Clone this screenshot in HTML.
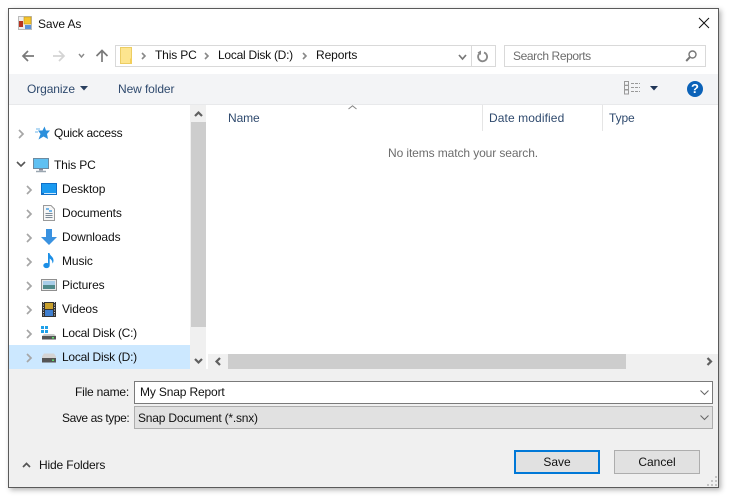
<!DOCTYPE html>
<html><head><meta charset="utf-8">
<style>
html,body{margin:0;padding:0;background:#fff}
body{width:731px;height:500px;position:relative;overflow:hidden;font-family:"Liberation Sans",sans-serif;font-size:12px;color:#111}
.a{position:absolute}
.t{position:absolute;white-space:nowrap;line-height:16px;letter-spacing:-.1px}
.b{color:#2f4a6e}
svg{position:absolute;overflow:visible}
</style></head><body>
<div class="a" style="left:8px;top:8px;width:709px;height:478px;border:1px solid #5a5a5a;background:#f0f0f0;box-shadow:2px 2px 5px rgba(0,0,0,.3)"></div>
<div class="a" style="left:9px;top:9px;width:709px;height:65px;background:#fff"></div>
<div class="a" style="left:9px;top:74px;width:709px;height:30px;background:#f3f4f6"></div>
<div class="a" style="left:9px;top:104px;width:709px;height:1px;background:#e8e9eb"></div>
<div class="a" style="left:9px;top:105px;width:181px;height:264px;background:#fff"></div>
<div class="a" style="left:191px;top:105px;width:15px;height:264px;background:#f0f0f0"></div>
<div class="a" style="left:191px;top:122px;width:15px;height:205px;background:#cdcdcd"></div>
<div class="a" style="left:206px;top:105px;width:2px;height:264px;background:#fff"></div>
<div class="a" style="left:208px;top:105px;width:510px;height:249px;background:#fff"></div>
<div class="a" style="left:208px;top:354px;width:510px;height:15px;background:#f0f0f0"></div>
<div class="a" style="left:228px;top:354px;width:398px;height:15px;background:#cdcdcd"></div>
<div class="a" style="left:9px;top:345px;width:181px;height:24px;background:#cce8ff"></div>
<div class="a" style="left:482px;top:105px;width:1px;height:26px;background:#e5e5e5"></div>
<div class="a" style="left:602px;top:105px;width:1px;height:26px;background:#e5e5e5"></div>

<!-- title -->
<svg style="left:18px;top:16px" width="15" height="15">
<rect x=".5" y=".5" width="13" height="13" fill="#eee" stroke="#bbb"/>
<rect x="1" y="5" width="4" height="6" fill="#b8331f"/><rect x="6" y="1" width="7" height="7" fill="#f4c430" stroke="#c99a10" stroke-width=".6"/><rect x="7" y="9" width="6" height="4" fill="#5b93d8"/>
</svg>
<div class="t" style="left:38px;top:16px">Save As</div>
<svg style="left:698px;top:17px" width="14" height="14"><path d="M1 1L11 11M11 1L1 11" stroke="#111" stroke-width="1" fill="none"/></svg>

<!-- nav -->
<svg style="left:22px;top:49px" width="14" height="14"><path d="M1 7H12M6 2L1 7L6 12" stroke="#7a7a7a" stroke-width="1.700" fill="none"/></svg>
<svg style="left:52px;top:49px" width="14" height="14"><path d="M1 7H12M7 2L12 7L7 12" stroke="#d4d4d4" stroke-width="1.700" fill="none"/></svg>
<svg style="left:78px;top:53px" width="8" height="6"><path d="M1 1L3.500 4L6 1" stroke="#8a8a8a" stroke-width="1.400" fill="none"/></svg>
<svg style="left:95px;top:49px" width="14" height="14"><path d="M7 13V2M1.500 7L7 1.500L12.500 7" stroke="#7a7a7a" stroke-width="1.700" fill="none"/></svg>
<div class="a" style="left:115px;top:45px;width:379px;height:20px;border:1px solid #d9d9d9;background:#fff"></div>
<div class="a" style="left:471px;top:46px;width:1px;height:20px;background:#d9d9d9"></div>
<svg style="left:120px;top:47px" width="13" height="17"><path d="M.5.5H11.500V16.500H.5Z" fill="#fde58f" stroke="#eccd63"/><path d="M10 11.500H12V16.500H10Z" fill="#f4cf5a"/></svg>
<svg style="left:141px;top:52px" width="6" height="9"><path d="M1 1L4 4L1 7" stroke="#888" stroke-width="1.600" fill="none"/></svg>
<div class="t" style="left:155px;top:47px;letter-spacing:-.15px">This PC</div>
<svg style="left:204px;top:52px" width="6" height="9"><path d="M1 1L4 4L1 7" stroke="#888" stroke-width="1.600" fill="none"/></svg>
<div class="t" style="left:218px;top:47px;letter-spacing:-.25px">Local Disk (D:)</div>
<svg style="left:302px;top:52px" width="6" height="9"><path d="M1 1L4 4L1 7" stroke="#888" stroke-width="1.600" fill="none"/></svg>
<div class="t" style="left:316px;top:47px">Reports</div>
<svg style="left:458px;top:54px" width="10" height="7"><path d="M1 1L4.500 5L8 1" stroke="#777" stroke-width="1.700" fill="none"/></svg>
<svg style="left:476px;top:50px" width="13" height="13"><path d="M3.500 3.500A4.500 4.500 0 1 0 8 2.500" stroke="#888" stroke-width="1.800" fill="none"/><path d="M4 .5V5L.5 2.500Z" fill="#888" transform="translate(1,0)"/></svg>
<div class="a" style="left:504px;top:45px;width:200px;height:20px;border:1px solid #d9d9d9;background:#fff"></div>
<div class="t" style="left:513px;top:48px;color:#6d6d6d;letter-spacing:-.4px">Search Reports</div>
<svg style="left:685px;top:50px" width="12" height="12"><circle cx="7.500" cy="4.500" r="3.500" stroke="#777" stroke-width="1.400" fill="none"/><path d="M4.800 7.200L1.200 11" stroke="#777" stroke-width="2"/></svg>

<!-- toolbar -->
<div class="t b" style="left:27px;top:81px">Organize</div>
<svg style="left:80px;top:86px" width="8" height="5"><path d="M0 0H8L4 4.500Z" fill="#2a3f5f"/></svg>
<div class="t b" style="left:118px;top:81px">New folder</div>
<svg style="left:624px;top:81px" width="17" height="15"><rect x=".5" y=".5" width="4" height="3.700" fill="none" stroke="#999"/><rect x=".5" y="4.500" width="4" height="4" fill="none" stroke="#999"/><rect x=".5" y="9" width="4" height="4" fill="none" stroke="#999"/><path d="M7 2.500H16M7 6.500H16M7 10.500H16" stroke="#999" stroke-dasharray="3 1"/></svg>
<svg style="left:650px;top:86px" width="8" height="5"><path d="M0 0H8L4 4.500Z" fill="#1f3557"/></svg>
<div class="a" style="left:687px;top:81px;width:16px;height:16px;border-radius:50%;background:#0b62b8;color:#fff;font-weight:bold;font-size:13px;line-height:16px;text-align:center">?</div>

<!-- headers -->
<svg style="left:348px;top:105px" width="9" height="5"><path d="M.5 4L4.500 .8L8.500 4" stroke="#888" fill="none"/></svg>
<div class="t b" style="left:228px;top:110px">Name</div>
<div class="t b" style="left:489px;top:110px;letter-spacing:.1px">Date modified</div>
<div class="t b" style="left:609px;top:110px">Type</div>
<div class="t" style="left:388px;top:145px;color:#6d6d6d">No items match your search.</div>

<!-- scroll arrows -->
<svg style="left:194px;top:111px" width="9" height="6"><path d="M1 5L4.500 1.500L8 5" stroke="#606060" stroke-width="2.200" fill="none"/></svg>
<svg style="left:194px;top:358px" width="9" height="6"><path d="M1 1L4.500 4.500L8 1" stroke="#606060" stroke-width="2.200" fill="none"/></svg>
<svg style="left:215px;top:357px" width="7" height="9"><path d="M5 1L1.500 4.500L5 8" stroke="#606060" stroke-width="2.200" fill="none"/></svg>
<svg style="left:706px;top:357px" width="7" height="9"><path d="M1.500 1L5 4.500L1.500 8" stroke="#606060" stroke-width="2.200" fill="none"/></svg>

<!-- tree -->
<svg style="left:18px;top:129px" width="6" height="10"><path d="M1 1L5 5L1 9" stroke="#a6a6a6" stroke-width="1.700" fill="none"/></svg>
<svg style="left:35px;top:126px" width="15" height="14"><path d="M9.500 .5L11 4.500H15L12 8L13 13L8.500 10.500L3.500 13.500L5.500 8L3 4.500H7.500Z" fill="#2a8fdc"/><path d="M1 3H5M0 6H3" stroke="#6db4e8"/></svg>
<div class="t" style="left:54px;top:125px;letter-spacing:-.25px">Quick access</div>
<svg style="left:16px;top:161px" width="10" height="7"><path d="M1 1L5 5L9 1" stroke="#555" stroke-width="1.600" fill="none"/></svg>
<svg style="left:33px;top:158px" width="16" height="15"><rect x=".5" y=".5" width="15" height="10" fill="#5fc0f2" stroke="#6d8aa0"/><path d="M6 11H10V12.500H6Z" fill="#889"/><path d="M3 13.500H13" stroke="#9aa6b0" stroke-width="1.500"/></svg>
<div class="t" style="left:54px;top:157px;letter-spacing:-.15px">This PC</div>

<svg style="left:26px;top:185px" width="6" height="10"><path d="M1 1L5 5L1 9" stroke="#a6a6a6" stroke-width="1.700" fill="none"/></svg>
<svg style="left:41px;top:183px" width="16" height="12"><rect width="16" height="12" fill="#0f6fc8"/><rect x="1" y="1" width="14" height="9" fill="#1a9af0"/><path d="M3 10.500H15" stroke="#cfe8fb"/></svg>
<div class="t" style="left:62px;top:181px">Desktop</div>

<svg style="left:26px;top:209px" width="6" height="10"><path d="M1 1L5 5L1 9" stroke="#a6a6a6" stroke-width="1.700" fill="none"/></svg>
<svg style="left:43px;top:205px" width="12" height="16"><path d="M.5.5H8L11.500 4V15.500H.5Z" fill="#f6f6f6" stroke="#9a9a9a"/><path d="M3 4H6M6 6H9" stroke="#2a8fdc" stroke-width="1.200"/><path d="M2.500 8.500H9.500M2.500 10.500H9.500M2.500 12.500H9.500" stroke="#7d8a96"/></svg>
<div class="t" style="left:62px;top:205px">Documents</div>

<svg style="left:26px;top:233px" width="6" height="10"><path d="M1 1L5 5L1 9" stroke="#a6a6a6" stroke-width="1.700" fill="none"/></svg>
<svg style="left:41px;top:229px" width="16" height="16"><path d="M5 0H11V8H16L8 16L0 8H5Z" fill="#3a92e0"/></svg>
<div class="t" style="left:62px;top:229px">Downloads</div>

<svg style="left:26px;top:257px" width="6" height="10"><path d="M1 1L5 5L1 9" stroke="#a6a6a6" stroke-width="1.700" fill="none"/></svg>
<svg style="left:43px;top:252px" width="12" height="17"><ellipse cx="3.500" cy="13.500" rx="3.200" ry="2.600" fill="#1c8fe6"/><path d="M5 13V1H6.500C7 4 10.500 4.500 10.500 8.500C10.500 10 10 11 9.500 11.500C9.500 8.500 8 7.500 6.700 6.500V13Z" fill="#1c8fe6"/></svg>
<div class="t" style="left:62px;top:253px">Music</div>

<svg style="left:26px;top:281px" width="6" height="10"><path d="M1 1L5 5L1 9" stroke="#a6a6a6" stroke-width="1.700" fill="none"/></svg>
<svg style="left:41px;top:279px" width="16" height="12"><rect x=".5" y=".5" width="15" height="11" fill="#e8e8e8" stroke="#8f8f8f"/><rect x="2" y="2" width="12" height="4" fill="#a8cde8"/><rect x="2" y="6" width="12" height="4" fill="#4f8a8a"/></svg>
<div class="t" style="left:62px;top:277px">Pictures</div>

<svg style="left:26px;top:305px" width="6" height="10"><path d="M1 1L5 5L1 9" stroke="#a6a6a6" stroke-width="1.700" fill="none"/></svg>
<svg style="left:42px;top:302px" width="14" height="15"><rect width="14" height="15" fill="#333"/><rect x="3" y="1" width="8" height="6" fill="#c9a02c"/><rect x="3" y="8" width="8" height="6" fill="#3f7fd0"/><path d="M1.500 0V15M12.500 0V15" stroke="#ccc" stroke-dasharray="1 1.500"/></svg>
<div class="t" style="left:62px;top:301px">Videos</div>

<svg style="left:26px;top:329px" width="6" height="10"><path d="M1 1L5 5L1 9" stroke="#a6a6a6" stroke-width="1.700" fill="none"/></svg>
<svg style="left:41px;top:326px" width="16" height="14"><rect x="0" y="0" width="3" height="3" fill="#1fa0e8"/><rect x="4" y="0" width="3" height="3" fill="#1fa0e8"/><rect x="0" y="4" width="3" height="3" fill="#1fa0e8"/><rect x="4" y="4" width="3" height="3" fill="#1fa0e8"/><path d="M3 8H13L15 10V13H1V10Z" fill="#c9c9c9"/><rect x="1" y="10" width="14" height="3.500" fill="#555"/><rect x="11" y="11" width="2" height="1.500" fill="#5fe06a"/></svg>
<div class="t" style="left:62px;top:325px;letter-spacing:-.25px">Local Disk (C:)</div>

<svg style="left:26px;top:353px" width="6" height="10"><path d="M1 1L5 5L1 9" stroke="#a6a6a6" stroke-width="1.700" fill="none"/></svg>
<svg style="left:41px;top:352px" width="16" height="12"><path d="M3 1.500H13L15 4.500V7H1V4.500Z" fill="#d4d4d4"/><rect x="1" y="6" width="14" height="4.500" fill="#555"/><rect x="11" y="7.500" width="2" height="1.500" fill="#5fe06a"/></svg>
<div class="t" style="left:62px;top:349px;letter-spacing:-.25px">Local Disk (D:)</div>

<!-- bottom form -->
<div class="t" style="left:75px;top:384px;letter-spacing:-.2px">File name:</div>
<div class="a" style="left:134px;top:381px;width:577px;height:21px;border:1px solid #7a7a7a;background:#fff"></div>
<div class="t" style="left:140px;top:384px;letter-spacing:-.15px">My Snap Report</div>
<svg style="left:700px;top:390px" width="10" height="6"><path d="M.5 .5L4.500 4.500L8.500 .5" stroke="#666" fill="none"/></svg>
<div class="t" style="left:62px;top:410px;letter-spacing:-.42px">Save as type:</div>
<div class="a" style="left:134px;top:406px;width:577px;height:21px;border:1px solid #adadad;background:#e1e1e1"></div>
<div class="t" style="left:138px;top:410px;letter-spacing:-.2px">Snap Document (*.snx)</div>
<svg style="left:700px;top:415px" width="10" height="6"><path d="M.5 .5L4.500 4.500L8.500 .5" stroke="#666" fill="none"/></svg>

<svg style="left:22px;top:462px" width="10" height="6"><path d="M1 5L4.500 1.500L8 5" stroke="#555" stroke-width="1.700" fill="none"/></svg>
<div class="t" style="left:39px;top:457px;letter-spacing:-.15px">Hide Folders</div>

<div class="a" style="left:514px;top:450px;width:82px;height:20px;border:2px solid #0078d7;background:#e1e1e1;text-align:center;line-height:20px">Save</div>
<div class="a" style="left:614px;top:450px;width:84px;height:22px;border:1px solid #adadad;background:#e1e1e1;text-align:center;line-height:22px">Cancel</div>
<svg style="left:707px;top:476px" width="10" height="10"><path d="M8 0h2v2H8zM4 4h2v2H4zM8 4h2v2H8zM0 8h2v2H0zM4 8h2v2H4zM8 8h2v2H8z" fill="#c4c4c4"/></svg>
</body></html>
